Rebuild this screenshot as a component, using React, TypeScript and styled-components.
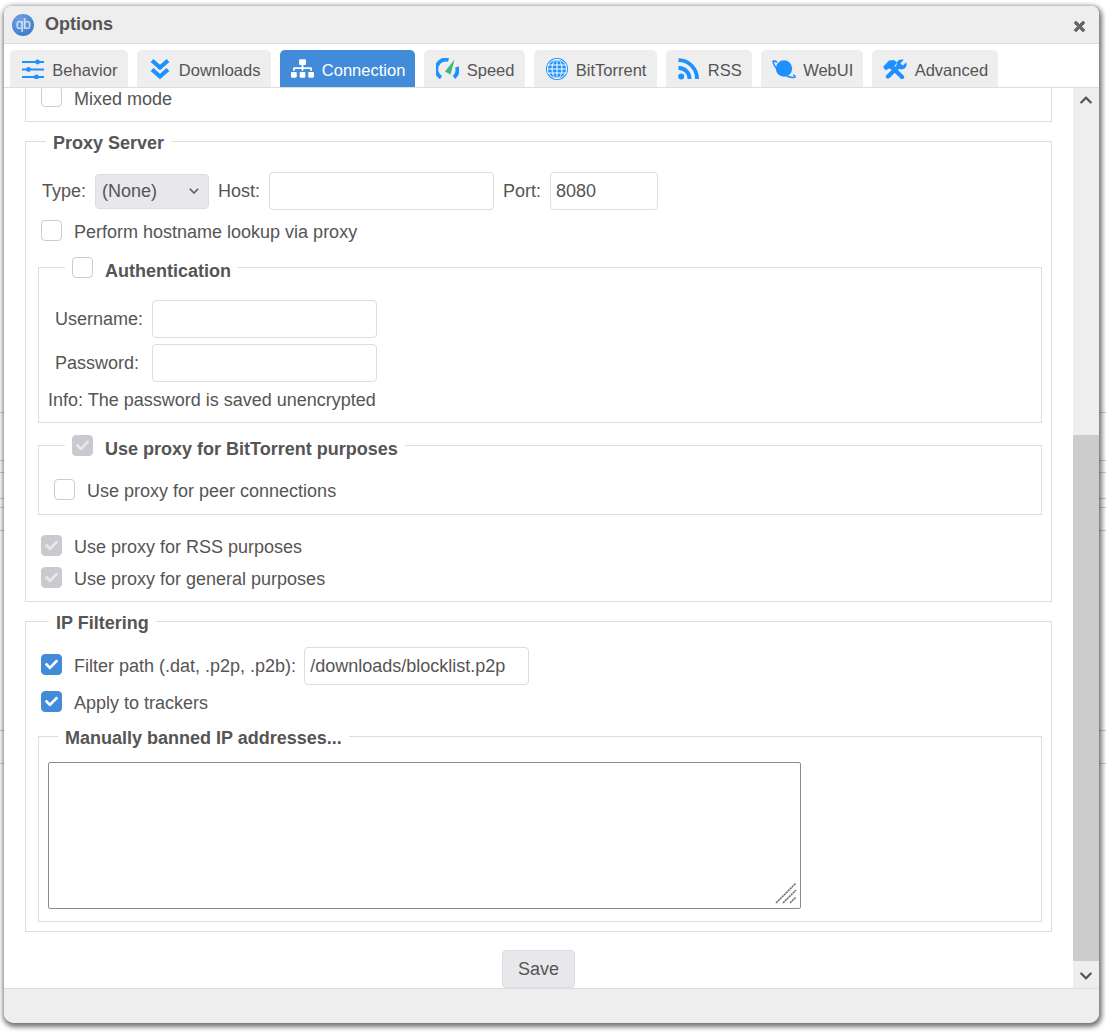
import React from "react";
import styled, { createGlobalStyle } from "styled-components";
import { FaSitemap, FaTimes, FaChevronUp, FaChevronDown, FaCheck } from "react-icons/fa";

const GlobalStyle = createGlobalStyle`
    html, body {
        margin: 0;
        height: 100%;
        background: #fff;
    }
    body {
        font-family: "Liberation Sans", Arial, sans-serif;
        font-size: 18px;
        color: #555;
    }
    * { box-sizing: border-box; }
`

// rows of the page behind the dialog, only the ends of them show
const rowLines = [412, 460, 472, 498, 507, 530, 730, 763]

const Page = styled.div`
    width: 1106px;
    height: 1033px;
    padding: 6px 7px 10px 4px;
    overflow: hidden;
    background: ${rowLines.map((y) => `linear-gradient(#ccc, #ccc) 0 ${y}px / 100% 1px no-repeat`).join(", ")};
`

const Window = styled.div`
    height: 100%;
    display: flex;
    flex-direction: column;
    background: #fff;
    border-radius: 8px 8px 10px 10px;
    overflow: hidden;
    box-shadow: 1px 2px 5px 2px rgba(0, 0, 0, 0.55);
`

const TitleBar = styled.header`
    height: 38px;
    flex: none;
    display: flex;
    align-items: center;
    gap: 11px;
    padding: 0 12px 0 8px;
    background: #eee;
    border-bottom: 1px solid #ddd;
`

const Logo = styled.div`
    width: 22px;
    height: 22px;
    border-radius: 50%;
    background: radial-gradient(circle at 40% 30%, #72a4e4, #2f6fc4);
    color: #dce9fa;
    font-size: 14px;
    line-height: 21px;
    text-align: center;
    letter-spacing: -0.5px;
`

const Title = styled.h1`
    flex: 1;
    margin: 0;
    font-size: 18px;
    font-weight: 700;
    color: #555;
`

const Close = styled.button`
    border: 0;
    padding: 0;
    background: none;
    color: #666;
    display: flex;
    font-size: 15px;
    margin-top: 3px;
    svg {
        stroke: currentColor;
        stroke-width: 30;
    }
`

const TabBar = styled.nav`
    height: 44px;
    flex: none;
    display: flex;
    align-items: flex-end;
    gap: 9px;
    padding-left: 6px;
    border-bottom: 1px solid #ddd;
`

const Tab = styled.div<{ $active?: boolean }>`
    height: 37px;
    display: flex;
    align-items: center;
    padding: 0 10.1px 0 9px;
    border-radius: 5px 5px 0 0;
    font-size: 16.5px;
    background: ${(p) => (p.$active ? "#428bd9" : "#eee")};
    color: ${(p) => (p.$active ? "#fff" : "#555")};
`

const TabLabel = styled.span`
    padding-top: 3px;
`

const TabIcon = styled.span<{ $active?: boolean }>`
    flex: none;
    width: 28px;
    margin-right: 5.3px;
    display: flex;
    justify-content: center;
    color: ${(p) => (p.$active ? "#fff" : "#1e90ff")};
`

const Body = styled.div`
    flex: 1;
    min-height: 0;
    display: flex;
`

const Content = styled.main`
    flex: 1;
    min-width: 0;
    overflow: hidden;
    padding: 0 21px;
`

const Group = styled.fieldset<{ $top: number; $bottom: number }>`
    margin: 0 0 9px;
    padding: ${(p) => p.$top}px 15px ${(p) => p.$bottom}px;
    border: 1px solid #ddd;
    min-width: 0;
`

const Inner = styled.fieldset<{ $top: number; $bottom: number; $gap: number }>`
    margin: ${(p) => p.$gap}px 0 0 -3px;
    width: 1004px;
    padding: ${(p) => p.$top}px 9px ${(p) => p.$bottom}px;
    border: 1px solid #ddd;
    min-width: 0;
`

const Box = styled.span<{ $state?: "on" | "locked" }>`
    flex: none;
    width: 21px;
    height: 21px;
    margin-right: 12px;
    border-radius: 4px;
    display: inline-flex;
    align-items: center;
    justify-content: center;
    font-size: 13px;
    color: ${(p) => (p.$state === "locked" ? "#e8e8ec" : "#fff")};
    border: 1px solid ${(p) => (p.$state === "on" ? "#428bd9" : p.$state === "locked" ? "#c9c9cf" : "#ccc")};
    background: ${(p) => (p.$state === "on" ? "#428bd9" : p.$state === "locked" ? "#c9c9cf" : "#fff")};
`

const Legend = styled.legend<{ $left: number }>`
    display: flex;
    align-items: center;
    font-weight: 700;
    font-size: 18px;
    color: #555;
    padding: 0 7px;
    margin-left: ${(p) => p.$left}px;
    line-height: 21px;
    ${Box} {
        margin-top: -1px;
    }
`

// the text in a legend sits lower than the box beside it
const LegendText = styled.span<{ $drop: number }>`
    padding-top: ${(p) => p.$drop}px;
    margin-bottom: -${(p) => p.$drop}px;
`

const Row = styled.div<{ $h?: number; $gap?: number }>`
    display: flex;
    align-items: center;
    height: ${(p) => p.$h ?? 32}px;
    margin-top: ${(p) => p.$gap ?? 0}px;
    white-space: nowrap;
    ${Box} {
        margin-top: -4px;
    }
`

const ScrolledOff = styled.div`
    height: 34px;
    margin-bottom: 9px;
    padding: 0 0 0 15px;
    border: 1px solid #ddd;
    border-top: 0;
    ${Box} {
        margin-top: -6px;
    }
`

const Field = styled.span<{ $w: number }>`
    display: inline-flex;
    align-items: center;
    width: ${(p) => p.$w}px;
    height: 38px;
    padding: 0 5px;
    border: 1px solid #ddd;
    border-radius: 4px;
    background: #fff;
`

const Select = styled.span`
    display: inline-flex;
    align-items: center;
    justify-content: space-between;
    width: 114px;
    height: 35px;
    padding: 0 9px 0 6px;
    border: 1px solid #ddd;
    border-radius: 4px;
    background: #e8e8ec;
`

const Gap = styled.span<{ $w: number }>`
    flex: none;
    width: ${(p) => p.$w}px;
`

const TextArea = styled.div`
    position: relative;
    width: 753px;
    height: 147px;
    border: 1px solid #8a8a9a;
    border-radius: 2px;
    background: #fff;
`

const Grip = styled.svg`
    position: absolute;
    right: 3px;
    bottom: 4px;
`

const SaveRow = styled.div`
    display: flex;
    justify-content: center;
    padding-top: 9px;
`

const SaveButton = styled.button`
    width: 73px;
    height: 38px;
    padding: 0;
    border: 1px solid #ddd;
    border-radius: 4px;
    background: #e8e8ec;
    color: #555;
    font: inherit;
`

const Scrollbar = styled.aside`
    width: 26px;
    flex: none;
    display: flex;
    flex-direction: column;
    background: #eee;
`

const Arrow = styled.div<{ $up?: boolean }>`
    height: 27px;
    flex: none;
    display: flex;
    align-items: center;
    justify-content: center;
    padding: ${(p) => (p.$up ? "0 0 4px" : "2px 0 0")};
    color: #555;
    font-size: 14px;
`

const Track = styled.div`
    flex: 1;
    display: flex;
    flex-direction: column;
    justify-content: flex-end;
`

const Thumb = styled.div`
    height: 526px;
    background: #ccc;
`

const Footer = styled.footer`
    height: 35px;
    flex: none;
    background: #eee;
    border-top: 1px solid #ddd;
`

const SlidersIcon = () => (
    <svg width="22" height="20" viewBox="0 0 22 20" fill="none" stroke="currentColor" strokeWidth="1.8">
        <path d="M0 3h22M0 10.5h22M0 18h22" />
        <circle cx="15.5" cy="3" r="2.4" fill="currentColor" stroke="none" />
        <circle cx="6.5" cy="10.5" r="2.4" fill="currentColor" stroke="none" />
        <circle cx="14.5" cy="18" r="2.4" fill="currentColor" stroke="none" />
    </svg>
)

const ChevronsIcon = () => (
    <svg width="20" height="22" viewBox="0 0 20 22" fill="none" stroke="currentColor" strokeWidth="4.2">
        <path d="M2 2.5l8 7 8-7M2 11.5l8 7 8-7" />
    </svg>
)

const GaugeIcon = () => (
    <svg width="23" height="22" viewBox="0 0 23 22" fill="none">
        <path d="M5 19.5A9.6 9.6 0 0 1 12.5 2" stroke="#1e90ff" strokeWidth="3.8" />
        <path d="M20.8 9A9.6 9.6 0 0 1 18 19.5" stroke="#1e90ff" strokeWidth="3.8" />
        <path d="M18.5 1.5L14.5 16.5 9 13.5Z" fill="#3cb878" />
    </svg>
)

const GlobeIcon = () => (
    <svg width="22" height="22" viewBox="0 0 22 22" fill="none">
        <circle cx="11" cy="11" r="11" fill="#1e90ff" />
        <g stroke="#fff" strokeWidth="1">
            <ellipse cx="11" cy="11" rx="5" ry="9.6" />
            <circle cx="11" cy="11" r="9.6" />
            <path d="M11 1.5v19M1.5 7h19M1.5 11h19M1.5 15h19" />
        </g>
    </svg>
)

const RssIcon = () => (
    <svg width="21" height="22" viewBox="0 0 21 22" fill="none" stroke="currentColor" strokeWidth="3.8">
        <circle cx="3.2" cy="18.5" r="3" fill="currentColor" stroke="none" />
        <path d="M.5 10A10.5 10.5 0 0 1 11.5 21" />
        <path d="M.5 2.2A18.5 18.5 0 0 1 19 21" />
    </svg>
)

const PlanetIcon = () => (
    <svg width="24" height="20" viewBox="0 0 24 20" fill="none">
        <circle cx="12" cy="9.5" r="8.2" fill="#1e90ff" />
        <path d="M4.5 3C1.8 1.2 .6 1.8 1.2 3.6c1 3.2 4.6 7.6 8.6 10.4 4.6 3.1 10.2 4.8 12.6 4.3 1-.2.7-1.1-.6-2.2" stroke="#1e90ff" strokeWidth="1.6" strokeLinecap="round" />
    </svg>
)

const ToolsIcon = () => (
    <svg width="24" height="20" viewBox="0 0 24 20">
        <path d="M19 18L8 7M5 17.5L17 6" stroke="currentColor" strokeWidth="4.4" strokeLinecap="round" />
        <path d="M0 8L6 1.5 11 1 14 3.5 9 10.5 5.5 9.5 3 11.5Z" fill="currentColor" />
        <circle cx="18.6" cy="5.4" r="5" fill="currentColor" />
        <path d="M18.6 5.4L24 0" stroke="#eee" strokeWidth="3.4" />
    </svg>
)

const SelectArrow = () => (
    <svg width="10" height="6" viewBox="0 0 10 6" fill="none" stroke="#555" strokeWidth="1.5">
        <path d="M.8.8L5 5l4.2-4.2" />
    </svg>
)

const tabs = [
    { label: "Behavior", icon: <SlidersIcon /> },
    { label: "Downloads", icon: <ChevronsIcon /> },
    { label: "Connection", icon: <FaSitemap size={23} />, active: true },
    { label: "Speed", icon: <GaugeIcon /> },
    { label: "BitTorrent", icon: <GlobeIcon /> },
    { label: "RSS", icon: <RssIcon /> },
    { label: "WebUI", icon: <PlanetIcon /> },
    { label: "Advanced", icon: <ToolsIcon /> },
]

const Check = ({ state }: { state?: "on" | "locked" }) => (
    <Box $state={state}>{state && <FaCheck />}</Box>
)

export default function App() {
    return (
        <>
            <GlobalStyle />
            <Page>
                <Window>
                    <TitleBar>
                        <Logo>qb</Logo>
                        <Title>Options</Title>
                        <Close aria-label="Close"><FaTimes /></Close>
                    </TitleBar>
                    <TabBar>
                        {tabs.map((t) => (
                            <Tab key={t.label} $active={t.active}>
                                <TabIcon $active={t.active}>{t.icon}</TabIcon>
                                <TabLabel>{t.label}</TabLabel>
                            </Tab>
                        ))}
                    </TabBar>
                    <Body>
                        <Content>
                            <ScrolledOff>
                                <Row $h={22}>
                                    <Check />
                                    Mixed mode
                                </Row>
                            </ScrolledOff>
                            <Group $top={17} $bottom={6}>
                                <Legend $left={5}>
                                    <LegendText $drop={2}>Proxy Server</LegendText>
                                </Legend>
                                <Row $h={44}>
                                    <Gap $w={1} />
                                    Type:
                                    <Gap $w={9} />
                                    <Select>
                                        (None)
                                        <SelectArrow />
                                    </Select>
                                    <Gap $w={9} />
                                    Host:
                                    <Gap $w={9} />
                                    <Field $w={225} />
                                    <Gap $w={9} />
                                    Port:
                                    <Gap $w={9} />
                                    <Field $w={108}>8080</Field>
                                </Row>
                                <Row $h={38}>
                                    <Check />
                                    Perform hostname lookup via proxy
                                </Row>
                                <Inner $gap={6} $top={19} $bottom={7}>
                                    <Legend $left={17}>
                                        <Check />
                                        <LegendText $drop={4}>Authentication</LegendText>
                                    </Legend>
                                    <Row $h={44}>
                                        <Gap $w={7} />
                                        Username:
                                        <Gap $w={9} />
                                        <Field $w={225} />
                                    </Row>
                                    <Row $h={44}>
                                        <Gap $w={7} />
                                        Password:
                                        <Gap $w={13} />
                                        <Field $w={225} />
                                    </Row>
                                    <Row $h={30}>Info: The password is saved unencrypted</Row>
                                </Inner>
                                <Inner $gap={12} $top={19} $bottom={7}>
                                    <Legend $left={17}>
                                        <Check state="locked" />
                                        <LegendText $drop={4}>Use proxy for BitTorrent purposes</LegendText>
                                    </Legend>
                                    <Row>
                                        <Gap $w={6} />
                                        <Check />
                                        Use proxy for peer connections
                                    </Row>
                                </Inner>
                                <Row $gap={16}>
                                    <Check state="locked" />
                                    Use proxy for RSS purposes
                                </Row>
                                <Row>
                                    <Check state="locked" />
                                    Use proxy for general purposes
                                </Row>
                            </Group>
                            <Group $top={13} $bottom={9}>
                                <Legend $left={8}>
                                    <LegendText $drop={2}>IP Filtering</LegendText>
                                </Legend>
                                <Row $h={42}>
                                    <Check state="on" />
                                    Filter path (.dat, .p2p, .p2b):
                                    <Gap $w={8} />
                                    <Field $w={225}>/downloads/blocklist.p2p</Field>
                                </Row>
                                <Row>
                                    <Check state="on" />
                                    Apply to trackers
                                </Row>
                                <Inner $gap={7} $top={15} $bottom={12}>
                                    <Legend $left={10}>
                                        <LegendText $drop={2}>Manually banned IP addresses...</LegendText>
                                    </Legend>
                                    <TextArea>
                                        <Grip width="22" height="22" viewBox="0 0 22 22" stroke="#777" strokeWidth="1.7" strokeDasharray="2.2 .6">
                                            <path d="M1 21L21 1M8 21L21 8M15 21L21 15" />
                                        </Grip>
                                    </TextArea>
                                </Inner>
                            </Group>
                            <SaveRow>
                                <SaveButton>Save</SaveButton>
                            </SaveRow>
                        </Content>
                        <Scrollbar>
                            <Arrow $up><FaChevronUp /></Arrow>
                            <Track><Thumb /></Track>
                            <Arrow><FaChevronDown /></Arrow>
                        </Scrollbar>
                    </Body>
                    <Footer />
                </Window>
            </Page>
        </>
    )
}
